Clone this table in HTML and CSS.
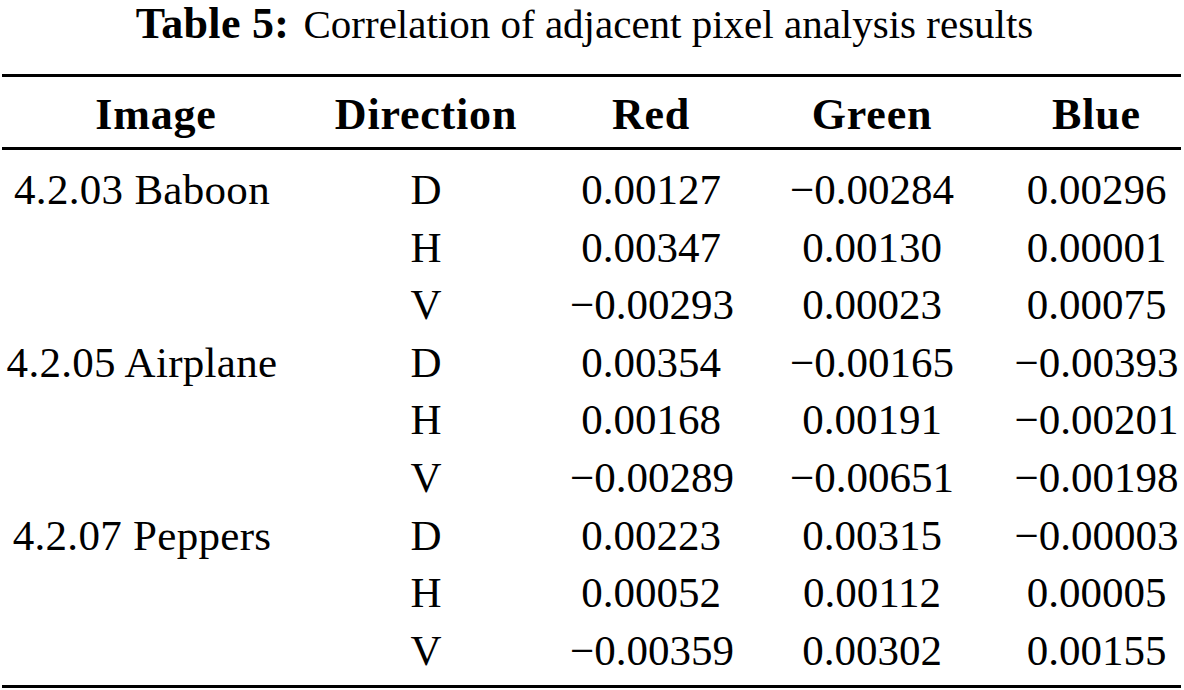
FILE: index.html
```html
<!DOCTYPE html>
<html>
<head>
<meta charset="utf-8">
<link rel="stylesheet" href="styles.css">
</head>
<body>
<div class="page">
  <p class="caption"><b>Table 5:</b> Correlation of adjacent pixel analysis results</p>
  <div class="table">
    <div class="row head">
      <div class="c1">Image</div>
      <div class="c2">Direction</div>
      <div class="c3">Red</div>
      <div class="c4">Green</div>
      <div class="c5">Blue</div>
    </div>
    <div class="body">
      <div class="row"><div class="c1">4.2.03 Baboon</div><div class="c2">D</div><div class="c3">0.00127</div><div class="c4">−0.00284</div><div class="c5">0.00296</div></div>
      <div class="row"><div class="c1"></div><div class="c2">H</div><div class="c3">0.00347</div><div class="c4">0.00130</div><div class="c5">0.00001</div></div>
      <div class="row"><div class="c1"></div><div class="c2">V</div><div class="c3">−0.00293</div><div class="c4">0.00023</div><div class="c5">0.00075</div></div>
      <div class="row"><div class="c1">4.2.05 Airplane</div><div class="c2">D</div><div class="c3">0.00354</div><div class="c4">−0.00165</div><div class="c5">−0.00393</div></div>
      <div class="row"><div class="c1"></div><div class="c2">H</div><div class="c3">0.00168</div><div class="c4">0.00191</div><div class="c5">−0.00201</div></div>
      <div class="row"><div class="c1"></div><div class="c2">V</div><div class="c3">−0.00289</div><div class="c4">−0.00651</div><div class="c5">−0.00198</div></div>
      <div class="row"><div class="c1">4.2.07 Peppers</div><div class="c2">D</div><div class="c3">0.00223</div><div class="c4">0.00315</div><div class="c5">−0.00003</div></div>
      <div class="row"><div class="c1"></div><div class="c2">H</div><div class="c3">0.00052</div><div class="c4">0.00112</div><div class="c5">0.00005</div></div>
      <div class="row"><div class="c1"></div><div class="c2">V</div><div class="c3">−0.00359</div><div class="c4">0.00302</div><div class="c5">0.00155</div></div>
    </div>
  </div>
</div>
</body>
</html>
```

FILE: styles.css
```css
html, body {
  margin: 0;
  padding: 0;
  background: #ffffff;
}

body {
  font-family: "Liberation Serif", "Times New Roman", serif;
  color: #000000;
}

.page {
  width: 1179px;
  margin-left: 2px;
}

.caption {
  margin: 0 0 26px 0;
  padding-right: 14px;
  font-size: 41px;
  line-height: 48px;
  text-align: center;
}

.caption b {
  font-weight: bold;
  font-size: 44px;
  letter-spacing: 0.3px;
  margin-right: 4px;
}

.table {
  border-top: 3px solid #000;
  border-bottom: 3px solid #000;
}

.row {
  display: grid;
  grid-template-columns: 280px 288px 162px 280px 169px;
  font-size: 43px;
  line-height: 57.6px;
  text-align: center;
  white-space: nowrap;
}

.body .c1 {
  letter-spacing: 0.3px;
}

.head {
  font-weight: bold;
  font-size: 44px;
  letter-spacing: 0.8px;
  line-height: 48px;
  padding: 14px 0 8px 0;
  border-bottom: 3px solid #000;
}

.head .c1 { padding-left: 28px; }

.body {
  padding: 11px 0 6px 0;
}
```
